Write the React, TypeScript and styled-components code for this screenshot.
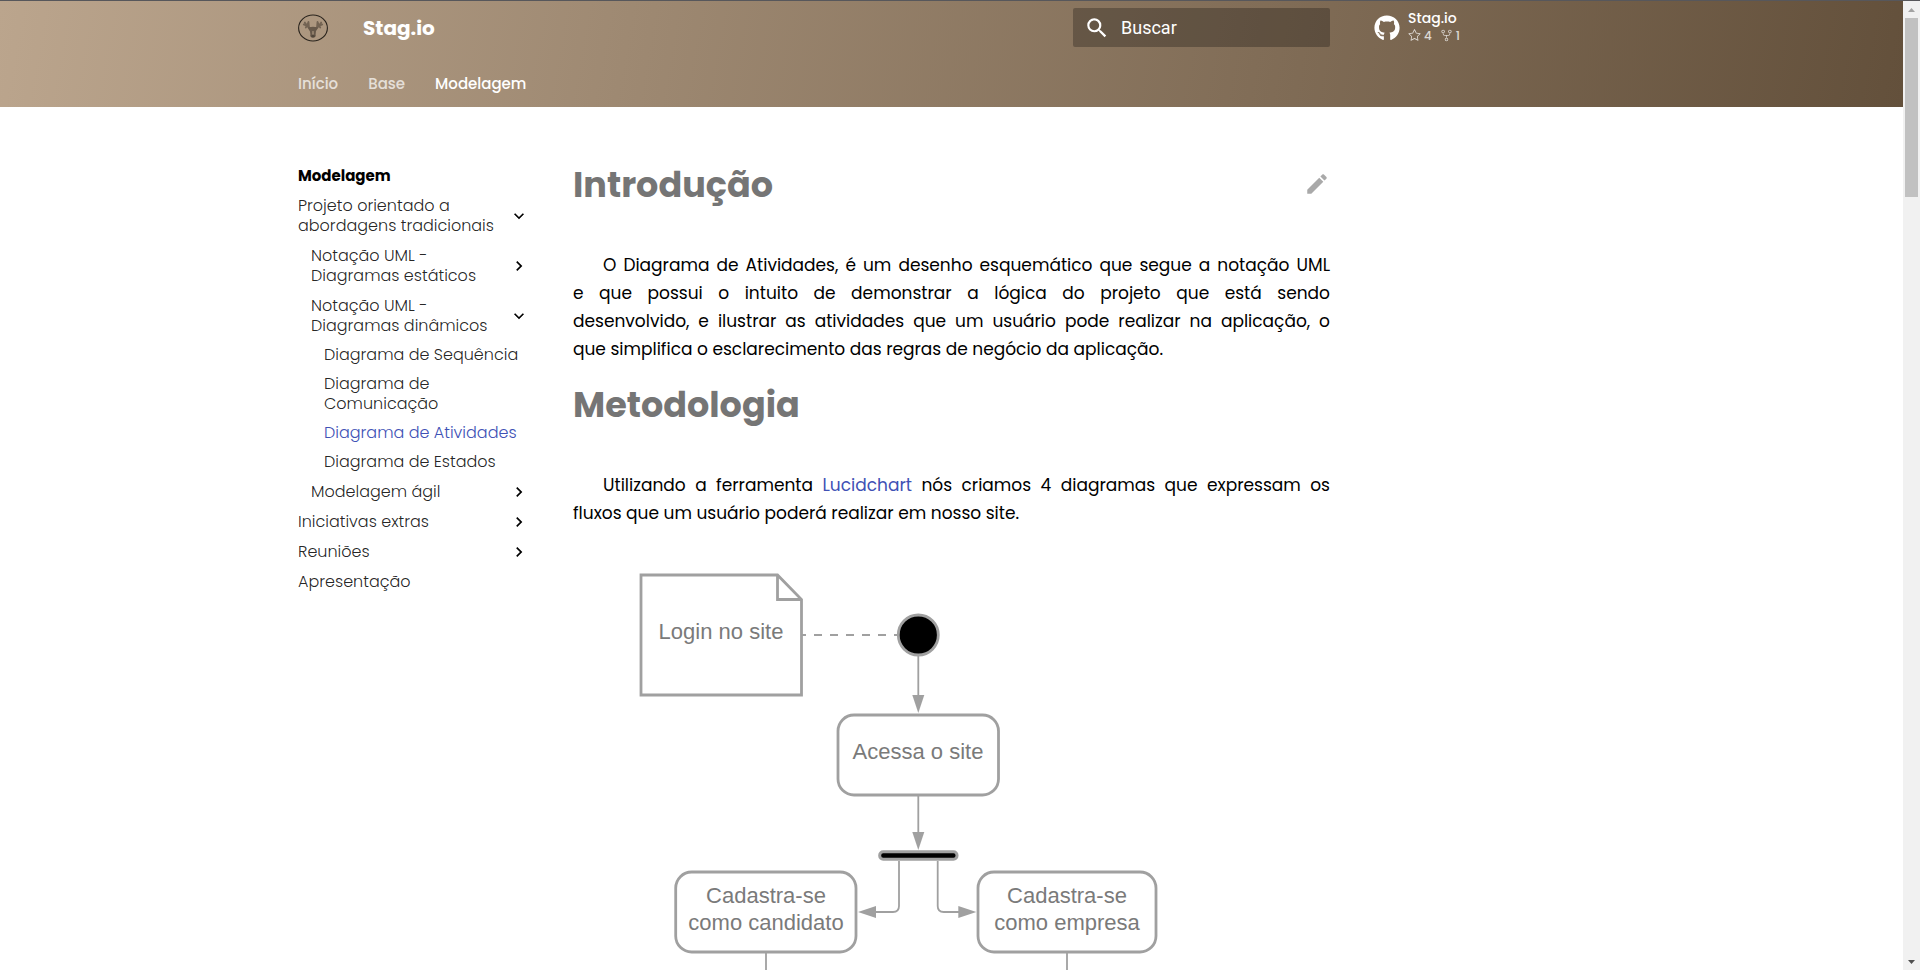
import React from "react";
import styled, { createGlobalStyle } from "styled-components";
import { FaGithub } from "react-icons/fa";
import { GoStar, GoRepoForked } from "react-icons/go";

const GlobalStyle = createGlobalStyle`
  *, *::before, *::after { box-sizing: border-box; }
  body {
    margin: 0;
    background: #fff;
    color: #000;
    font-family: Poppins, Inter, "Open Sans", sans-serif;
    font-weight: 300;
  }
  a { color: inherit; text-decoration: none; }
`;

const Shell = styled.div`
  display: flex;
  height: 100vh;
  border-top: 1px solid #57575b;
`;

const Page = styled.div`
  flex: 1;
  min-width: 0;
  overflow-y: auto;
  scrollbar-width: none;
`;

const Header = styled.header`
  color: #fff;
  background: linear-gradient(100deg, #bba58d, #63503b);
`;

const Grid = styled.div`
  display: flex;
  width: 100%;
  max-width: 1343px;
  margin: 0 auto;
`;

const TopBar = styled(Grid)`
  align-items: center;
  height: 53px;
  padding-left: 18px;
`;

const LogoLink = styled.a`
  display: flex;
`;

const SiteTitle = styled.span`
  flex: 1;
  margin-left: 35px;
  font-size: 20px;
  font-weight: 700;
  line-height: 26px;
`;

const SearchForm = styled.form`
  display: flex;
  align-items: center;
  gap: 11px;
  width: 257px;
  height: 39px;
  padding: 0 11px;
  border-radius: 2px;
  background: rgba(0, 0, 0, 0.26);
`;

const SearchInput = styled.input`
  flex: 1;
  min-width: 0;
  padding: 0;
  border: 0;
  outline: 0;
  background: transparent;
  color: #fff;
  font: 400 18px Roboto, sans-serif;
  &::placeholder { color: #fff; opacity: 1; }
`;

const Source = styled.a`
  display: flex;
  align-items: center;
  gap: 8px;
  width: 249px;
  margin-left: 44px;
`;

const SourceText = styled.div`
  padding-bottom: 2px;
  font-size: 14px;
  font-weight: 500;
  line-height: 18px;
`;

const Facts = styled.ul`
  display: flex;
  gap: 8px;
  margin: 0;
  padding: 0;
  list-style: none;
  font-size: 12px;
  opacity: 0.75;
`;

const Fact = styled.li`
  display: flex;
  align-items: center;
  gap: 3px;
`;

const Tabs = styled(Grid)`
  align-items: center;
  gap: 30px;
  height: 53px;
  padding: 6px 18px 0;
  font-size: 15px;
  font-weight: 500;
  line-height: 20px;
`;

const Tab = styled.a<{ $active?: boolean }>`
  opacity: ${(p) => (p.$active ? 1 : 0.7)};
`;

const Columns = styled(Grid)`
  padding-top: 55px;
`;

const Sidebar = styled.nav`
  flex: 0 0 267px;
  padding: 4px 18px 0;
  font-size: 16px;
  line-height: 20px;
  color: rgba(0, 0, 0, 0.87);
`;

const NavTitle = styled.div`
  font-size: 15px;
  font-weight: 700;
  color: #000;
`;

const NavRow = styled.div<{ $level: number; $current?: boolean }>`
  display: flex;
  align-items: center;
  justify-content: space-between;
  margin-top: ${(p) => (p.$level === 2 ? 9 : 10)}px;
  padding-left: ${(p) => p.$level * 13}px;
  color: ${(p) => (p.$current ? "#4051b5" : "inherit")};
`;

const NavToggle = styled.button`
  display: flex;
  align-items: center;
  justify-content: space-between;
  width: 100%;
  padding: 0;
  border: 0;
  background: none;
  color: inherit;
  font: inherit;
  text-align: left;
  cursor: pointer;
`;

const NavLabel = styled.span`
  white-space: pre-line;
`;

const Chevron = styled.svg<{ $open?: boolean }>`
  flex: none;
  width: 20px;
  height: 20px;
  fill: #000;
  transform: rotate(${(p) => (p.$open ? 90 : 0)}deg);
`;

const Content = styled.main`
  flex: 1;
  min-width: 0;
  padding: 0 26px;
`;

const TitleRow = styled.div`
  display: flex;
  align-items: flex-start;
  justify-content: space-between;
`;

const EditLink = styled.a`
  display: flex;
  padding: 9px 0 8px;
  color: #a9a9a9;
`;

const Heading = styled.h1`
  margin: 0 0 43px;
  font-size: 35px;
  font-weight: 700;
  line-height: 46px;
  color: #757575;
`;

const Paragraph = styled.p`
  margin: 0 0 19px;
  font-size: 17px;
  font-weight: 400;
  line-height: 28px;
  text-align: justify;
  text-indent: 30px;
`;

const TextLink = styled.a`
  && { color: #4051b5; }
`;

const Diagram = styled.svg`
  display: block;
  width: 100%;
  font: 22px "Liberation Sans", Arial, sans-serif;
`;

const RightColumn = styled.aside`
  flex: 0 0 267px;
`;

const Scrollbar = styled.div`
  display: flex;
  flex-direction: column;
  align-items: center;
  flex: 0 0 17px;
  background: #f1f1f1;
`;

const ScrollThumb = styled.div`
  width: 13px;
  height: 179px;
  margin-bottom: auto;
  background: #c1c1c1;
`;

const Icon = ({ d, size = 26 }: { d: string; size?: number }) => (
  <svg width={size} height={size} viewBox="0 0 24 24" fill="currentColor" aria-hidden="true">
    <path d={d} />
  </svg>
);

const SEARCH =
  "M9.5 3A6.5 6.5 0 0 1 16 9.5c0 1.61-.59 3.09-1.56 4.23l.27.27h.79l5 5-1.5 1.5-5-5v-.79l-.27-.27A6.516 6.516 0 0 1 9.5 16 6.5 6.5 0 0 1 3 9.5 6.5 6.5 0 0 1 9.5 3m0 2C7 5 5 7 5 9.5S7 14 9.5 14 14 12 14 9.5 12 5 9.5 5Z";
const PENCIL =
  "M20.71 7.04c.39-.39.39-1.04 0-1.41l-2.34-2.34c-.37-.39-1.02-.39-1.41 0l-1.84 1.83 3.75 3.75M3 17.25V21h3.75L17.81 9.93l-3.75-3.75L3 17.25Z";

const DeerLogo = () => (
  <svg width="30" height="28" viewBox="0 0 30 28" aria-hidden="true">
    <ellipse cx="15" cy="14" rx="14.4" ry="13" fill="none" stroke="#2a241d" strokeWidth="1.1" />
    <g opacity="0.7">
      <g fill="none" stroke="#5b4e40" strokeLinecap="round" strokeLinejoin="round" strokeWidth="1.8">
        <path d="M13 14.500C10.500 13 8 12.500 6.800 8.500M8 11.500 5.800 10.500M9.500 12.500 9.600 9.500M11 13.500 10.500 8M8.500 12.500 7.800 13.500" />
        <path d="M17 14.500C19.500 13 22 12.500 23.200 8.500M22 11.500 24.200 10.500M20.500 12.500 20.400 9.500M19 13.500 19.500 8M21.500 12.500 22.200 13.500" />
      </g>
      <path d="M9.500 13.500 13 13l2-.3 2 .3 3.500.5-2.500 3.500-.4 3.500c.8 1.500-.6 3.200-2.600 3.200s-3.400-1.700-2.600-3.200L12 17.500Z" fill="#4a3f34" />
      <path d="M13 22c.8-1.200 3.200-1.200 4 0-.5 1.700-3.500 1.700-4 0Z" fill="#2a241d" />
      <path d="M14.200 17h1.600l.2 3.500h-2Z" fill="#8b7a66" />
    </g>
  </svg>
);

type Entry = { label: string; level: number; open?: boolean; group?: boolean; current?: boolean };

const ENTRIES: Entry[] = [
  { label: "Projeto orientado a\nabordagens tradicionais", level: 0, group: true, open: true },
  { label: "Notação UML -\nDiagramas estáticos", level: 1, group: true },
  { label: "Notação UML -\nDiagramas dinâmicos", level: 1, group: true, open: true },
  { label: "Diagrama de Sequência", level: 2 },
  { label: "Diagrama de\nComunicação", level: 2 },
  { label: "Diagrama de Atividades", level: 2, current: true },
  { label: "Diagrama de Estados", level: 2 },
  { label: "Modelagem ágil", level: 1, group: true },
  { label: "Iniciativas extras", level: 0, group: true },
  { label: "Reuniões", level: 0, group: true },
  { label: "Apresentação", level: 0 },
];

const NavEntry = ({ label, level, open, group, current }: Entry) => (
  <NavRow $level={level} $current={current}>
    {group ? (
      <NavToggle type="button" aria-expanded={!!open}>
        <NavLabel>{label}</NavLabel>
        <Chevron $open={open} viewBox="0 0 24 24" aria-hidden="true">
          <path d="M8.590 16.580 13.170 12 8.590 7.410 10 6l6 6-6 6-1.410-1.420Z" />
        </Chevron>
      </NavToggle>
    ) : (
      <a href="#" aria-current={current ? "page" : undefined}>
        <NavLabel>{label}</NavLabel>
      </a>
    )}
  </NavRow>
);

const ActivityDiagram = () => (
  <Diagram viewBox="573 546 757 620" role="img" aria-label="Diagrama de atividades: login no site">
    <g fill="none" stroke="#a0a0a0" strokeWidth="2.800">
      <path d="M641 575H777.500L801.500 599.500V695H641ZM777.500 575V599.500H801.500" />
      <rect x="838" y="715" width="160.500" height="80" rx="16" />
      <rect x="675.700" y="872" width="180.300" height="80" rx="16" />
      <rect x="978" y="872" width="178" height="80" rx="16" />
      <circle cx="918.300" cy="635" r="20" fill="#000" />
      <rect x="879.700" y="851.700" width="77.300" height="7.600" rx="3.500" fill="#000" strokeWidth="3" />
    </g>
    <g fill="none" stroke="#a0a0a0" strokeWidth="1.800">
      <path d="M802 635H897" strokeDasharray="8 8" strokeDashoffset="4" />
      <path d="M918.300 656V696M918.300 796V833M766 953V1100M1067 953V1100" />
      <path d="M899 861V906Q899 912 893 912H875" />
      <path d="M937.700 861V906Q937.700 912 943.700 912H959" />
    </g>
    <g fill="#a0a0a0">
      <path d="M912.300 695H924.300L918.300 713Z" />
      <path d="M912.300 832H924.300L918.300 850Z" />
      <path d="M876 906V918L858 912Z" />
      <path d="M958.300 906V918L976.300 912Z" />
    </g>
    <g fill="#7a7a7a" textAnchor="middle">
      <text x="721" y="639">Login no site</text>
      <text x="918" y="759">Acessa o site</text>
      <text x="766" y="903">Cadastra-se</text>
      <text x="766" y="930">como candidato</text>
      <text x="1067" y="903">Cadastra-se</text>
      <text x="1067" y="930">como empresa</text>
    </g>
  </Diagram>
);

const Arrow = ({ up }: { up?: boolean }) => (
  <svg width="17" height="17" viewBox="0 0 17 17" aria-hidden="true">
    {up ? <path d="M5 11h7L8.500 7Z" fill="#a3a3a3" /> : <path d="M5 7h7l-3.500 4Z" fill="#505050" />}
  </svg>
);

export default function App() {
  return (
    <>
      <GlobalStyle />
      <Shell>
        <Page>
          <Header>
            <TopBar>
              <LogoLink href="#" aria-label="Stag.io">
                <DeerLogo />
              </LogoLink>
              <SiteTitle>Stag.io</SiteTitle>
              <SearchForm role="search">
                <Icon d={SEARCH} />
                <SearchInput type="text" placeholder="Buscar" aria-label="Buscar" />
              </SearchForm>
              <Source href="#">
                <FaGithub size={26} />
                <SourceText>
                  Stag.io
                  <Facts>
                    <Fact>
                      <GoStar size={13} />4
                    </Fact>
                    <Fact>
                      <GoRepoForked size={13} />1
                    </Fact>
                  </Facts>
                </SourceText>
              </Source>
            </TopBar>
            <Tabs as="nav">
              <Tab href="#">Início</Tab>
              <Tab href="#">Base</Tab>
              <Tab href="#" $active>
                Modelagem
              </Tab>
            </Tabs>
          </Header>
          <Columns>
            <Sidebar>
              <NavTitle>Modelagem</NavTitle>
              {ENTRIES.map((e) => (
                <NavEntry key={e.label} {...e} />
              ))}
            </Sidebar>
            <Content>
              <TitleRow>
                <Heading>Introdução</Heading>
                <EditLink href="#" aria-label="Editar esta página">
                  <Icon d={PENCIL} />
                </EditLink>
              </TitleRow>
              <Paragraph>
                O Diagrama de Atividades, é um desenho esquemático que segue a notação UML e&nbsp;que possui o intuito
                de demonstrar a lógica do projeto que está sendo desenvolvido,&nbsp;e&nbsp;ilustrar as atividades que
                um usuário pode realizar na aplicação, o que&nbsp;simplifica o esclarecimento das regras de negócio da
                aplicação.
              </Paragraph>
              <Heading>Metodologia</Heading>
              <Paragraph>
                Utilizando a ferramenta <TextLink href="#">Lucidchart</TextLink> nós criamos 4 diagramas que expressam
                os fluxos&nbsp;que um usuário poderá realizar em nosso site.
              </Paragraph>
              <ActivityDiagram />
            </Content>
            <RightColumn />
          </Columns>
        </Page>
        <Scrollbar aria-hidden="true">
          <Arrow up />
          <ScrollThumb />
          <Arrow />
        </Scrollbar>
      </Shell>
    </>
  );
}
